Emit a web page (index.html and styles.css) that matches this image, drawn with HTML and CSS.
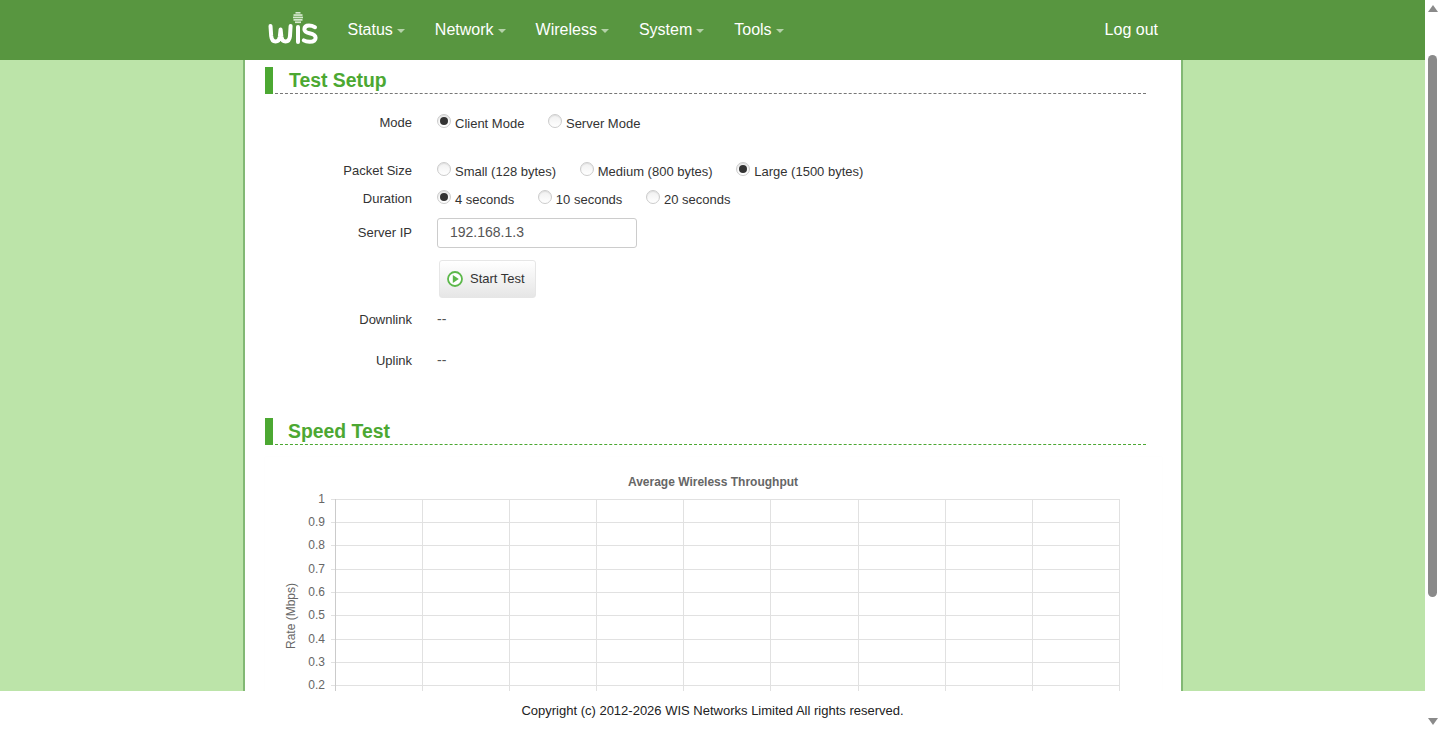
FILE: index.html
```html
<!DOCTYPE html>
<html lang="en">
<head>
    <meta charset="UTF-8">
    <title>Speed Test - WIS Networks</title>
    <link rel="stylesheet" href="styles.css">
</head>
<body>
    <div class="window">
        <div class="viewport">
            <header class="topbar">
                <svg class="logo" width="50" height="34" viewBox="0 0 50 34">
                    <g fill="none" stroke="#fff" stroke-width="4" stroke-linecap="round" stroke-linejoin="round">
                        <path d="M2.5 14 L3.2 24 Q3.8 29.5 7.6 29.5 Q11.2 29.5 11.8 25 L12.6 17.5 L13.4 25 Q14 29.5 17.6 29.5 Q21.4 29.5 22 24 L22.6 14"/>
                        <path d="M30 15 V30"/>
                        <path d="M47 15.2 Q44 13.6 41 13.6 Q36.4 13.6 36.4 17.2 Q36.4 20.2 41.5 21.2 Q47.6 22.4 47.6 25.8 Q47.6 29.8 41.5 29.8 Q38 29.8 35.8 28.4"/>
                    </g>
                    <g fill="#d5e8cd">
                        <rect x="27.5" y="0" width="5" height="1.6"/>
                        <rect x="25.5" y="2.2" width="9" height="1.7"/>
                        <rect x="25" y="4.6" width="10" height="1.7"/>
                        <rect x="25.5" y="7" width="9" height="1.7"/>
                        <rect x="27" y="9.4" width="6" height="1.7"/>
                    </g>
                </svg>
                <nav class="menu">
                    <a href="#">Status<span class="caret"></span></a>
                    <a href="#">Network<span class="caret"></span></a>
                    <a href="#">Wireless<span class="caret"></span></a>
                    <a href="#">System<span class="caret"></span></a>
                    <a href="#">Tools<span class="caret"></span></a>
                </nav>
                <a class="logout" href="#">Log out</a>
            </header>

            <main class="main">
                <div class="content">
                    <div class="section-title gray-line">
                        <h2>Test Setup</h2>
                    </div>

                    <div class="form-row row-mode">
                        <label class="row-label">Mode</label>
                        <div class="options">
                            <label class="option"><input type="radio" name="mode" checked>Client Mode</label>
                            <label class="option"><input type="radio" name="mode">Server Mode</label>
                        </div>
                    </div>
                    <div class="form-row row-size">
                        <label class="row-label">Packet Size</label>
                        <div class="options">
                            <label class="option"><input type="radio" name="size">Small (128 bytes)</label>
                            <label class="option"><input type="radio" name="size">Medium (800 bytes)</label>
                            <label class="option"><input type="radio" name="size" checked>Large (1500 bytes)</label>
                        </div>
                    </div>
                    <div class="form-row row-duration">
                        <label class="row-label">Duration</label>
                        <div class="options">
                            <label class="option"><input type="radio" name="duration" checked>4 seconds</label>
                            <label class="option"><input type="radio" name="duration">10 seconds</label>
                            <label class="option"><input type="radio" name="duration">20 seconds</label>
                        </div>
                    </div>
                    <div class="form-row row-ip">
                        <label class="row-label" for="serverIp">Server IP</label>
                        <input class="text-input" type="text" id="serverIp" value="192.168.1.3">
                    </div>
                    <button class="start-btn" type="button">
                        <svg width="16" height="16" viewBox="0 0 16 16">
                            <circle cx="8" cy="8" r="7" fill="#fff" stroke="#5cb84a" stroke-width="1.8"/>
                            <path d="M5.8 4 L11.8 8 L5.8 12 Z" fill="#5cb84a"/>
                        </svg>
                        Start Test
                    </button>
                    <div class="form-row row-result">
                        <label class="row-label">Downlink</label>
                        <span>--</span>
                    </div>
                    <div class="form-row row-result">
                        <label class="row-label">Uplink</label>
                        <span>--</span>
                    </div>

                    <div class="section-title speed-title">
                        <h2>Speed Test</h2>
                    </div>

                    <div class="chart-box">
                        <svg class="chart" width="897" height="300" viewBox="0 0 897 300">
                            <text class="chart-title" x="448" y="29" text-anchor="middle">Average Wireless Throughput</text>
                            <g class="grid">
                                <path d="M66 42.5H854.5M66 65.5H854.5M66 88.5H854.5M66 112.5H854.5M66 135.5H854.5M66 158.5H854.5M66 182.5H854.5M66 205.5H854.5M66 228.5H854.5M66 252.5H854.5"/>
                                <path d="M157.5 42V260M244.5 42V260M331.5 42V260M418.5 42V260M505.5 42V260M593.5 42V260M680.5 42V260M767.5 42V260M854.5 42V260"/>
                            </g>
                            <path class="axis" d="M70.5 42V260"/>
                            <g class="ticks" text-anchor="end">
                                <text x="60" y="46">1</text>
                                <text x="60" y="69">0.9</text>
                                <text x="60" y="92">0.8</text>
                                <text x="60" y="116">0.7</text>
                                <text x="60" y="139">0.6</text>
                                <text x="60" y="162">0.5</text>
                                <text x="60" y="186">0.4</text>
                                <text x="60" y="209">0.3</text>
                                <text x="60" y="232">0.2</text>
                            </g>
                            <text class="axis-label" transform="translate(30 159) rotate(-90)" text-anchor="middle">Rate (Mbps)</text>
                        </svg>
                    </div>
                </div>
            </main>

            <footer class="footer">Copyright (c) 2012-2026 WIS Networks Limited All rights reserved.</footer>
        </div>

        <div class="scrollbar">
            <span class="arrow-up"></span>
            <div class="track"><div class="thumb"></div></div>
            <span class="arrow-down"></span>
        </div>
    </div>
</body>
</html>
```

FILE: styles.css
```css
html, body {
    margin: 0;
    padding: 0;
    height: 100%;
    overflow: hidden;
}
body {
    font-family: "Liberation Sans", Arial, sans-serif;
    font-size: 13px;
    color: #333;
}
.window {
    display: flex;
    height: 731px;
}
.viewport {
    width: 1425px;
    display: flex;
    flex-direction: column;
}

/* top bar */
.topbar {
    height: 60px;
    flex: none;
    background-color: #589640;
    display: flex;
    align-items: center;
    padding: 0 267px 0 268px;
}
.logo {
    flex: none;
    margin-right: 29.5px;
    margin-top: -2px;
}
.menu {
    display: flex;
    gap: 30px;
}
.menu a, .logout {
    color: #fff;
    font-size: 16px;
    text-decoration: none;
}
.caret {
    display: inline-block;
    margin-left: 4px;
    vertical-align: middle;
    border-top: 4px solid #b5d2a9;
    border-left: 4px solid transparent;
    border-right: 4px solid transparent;
}
.logout {
    margin-left: auto;
}

/* main area */
.main {
    flex: 1;
    min-height: 0;
    overflow: hidden;
    background-color: #bce4a9;
}
.content {
    width: 881px;
    margin-left: 243px;
    padding: 7px 35px 0 20px;
    background-color: #fff;
    border-left: 2px solid #82b874;
    border-right: 2px solid #82b874;
    height: 100%;
    overflow: hidden;
}
.section-title {
    height: 27px;
    box-sizing: border-box;
    border-left: 8px solid #4ca832;
    padding-left: 16px;
    position: relative;
}
.section-title::after {
    content: "";
    position: absolute;
    left: 2px;
    right: 0;
    bottom: 0;
    border-bottom: 1px dashed #4ca832;
}
.gray-line::after {
    border-bottom-color: #777;
}
.section-title h2 {
    margin: 0;
    font-size: 19.4px;
    line-height: 26px;
    color: #4ca832;
}
.speed-title {
    margin-top: 48px;
    padding-left: 15px;
}

/* form rows */
.form-row {
    display: grid;
    grid-template-columns: 147px 1fr;
    column-gap: 25px;
    align-items: center;
}
.row-label {
    color: #333;
    text-align: right;
    grid-column: 1;
}
.row-mode .row-label, .row-size .row-label, .row-duration .row-label, .row-ip .row-label {
    margin-bottom: 2px;
}
.options {
    display: flex;
    gap: 23.6px;
}
.option {
    display: flex;
    align-items: center;
    gap: 4px;
}
.option input {
    appearance: none;
    -webkit-appearance: none;
    width: 14px;
    height: 14px;
    margin: -5px 0 0;
    border-radius: 50%;
    border: 1px solid #ccc;
    background: linear-gradient(#f0f0f0, #fff);
    box-shadow: inset 0 1px 1px rgba(0, 0, 0, 0.08);
    box-sizing: border-box;
    position: relative;
}
.option input:checked::after {
    content: "";
    position: absolute;
    left: 2px;
    top: 2px;
    width: 8px;
    height: 8px;
    border-radius: 50%;
    background-color: #333;
}
.row-mode {
    margin-top: 19px;
    height: 20px;
}
.row-size {
    margin-top: 28px;
    height: 20px;
}
.row-duration {
    margin-top: 8px;
    height: 20px;
}
.row-ip {
    margin-top: 9px;
    height: 30px;
}
.text-input {
    width: 200px;
    height: 30px;
    box-sizing: border-box;
    border: 1px solid #ccc;
    border-radius: 3px;
    padding: 0 12px 2px;
    font-family: inherit;
    font-size: 14px;
    color: #555;
}
.start-btn {
    display: flex;
    align-items: center;
    gap: 7px;
    height: 38px;
    width: 97px;
    margin: 12px 0 0 174px;
    padding: 0 0 2px 7px;
    border: 1px solid #e6e6e6;
    border-radius: 3px;
    background: linear-gradient(#fff, #e6e6e6);
    font-family: inherit;
    font-size: 13px;
    color: #333;
}
.start-btn svg {
    margin-top: 2px;
}
.row-result {
    height: 20px;
    margin-top: 11px;
}
.row-result + .row-result {
    margin-top: 21px;
}
.row-result span {
    color: #555;
    font-size: 14px;
}

/* chart */
.chart-box {
    margin-top: 12px;
    width: 897px;
    height: 300px;
    box-shadow: 0 0 1px rgba(0, 0, 0, 0.04);
}
.chart {
    display: block;
    font-family: "Liberation Sans", Arial, sans-serif;
}
.chart-title {
    font-size: 12px;
    font-weight: bold;
    fill: #666;
}
.grid path {
    fill: none;
    stroke: #e1e1e1;
    stroke-width: 1;
}
.axis {
    fill: none;
    stroke: #cbcbcb;
    stroke-width: 1;
}
.ticks text, .axis-label {
    font-size: 12px;
    fill: #666;
}

/* footer */
.footer {
    height: 40px;
    flex: none;
    background-color: #fff;
    color: #222;
    font-size: 13px;
    line-height: 40px;
    text-align: center;
}

/* page scrollbar */
.scrollbar {
    width: 15px;
    flex: none;
    background-color: #fff;
    display: flex;
    flex-direction: column;
    align-items: center;
    padding: 5px 0 6px;
    box-sizing: border-box;
}
.arrow-up, .arrow-down {
    width: 0;
    height: 0;
    border-left: 5px solid transparent;
    border-right: 5px solid transparent;
}
.arrow-up {
    border-bottom: 7px solid #8a8a8a;
}
.arrow-down {
    border-top: 7px solid #8a8a8a;
}
.track {
    flex: 1;
    width: 100%;
    padding-top: 43px;
    box-sizing: border-box;
}
.thumb {
    width: 9px;
    height: 542px;
    margin: 0 auto;
    background-color: #8a8a8a;
    border-radius: 5px;
}
```
